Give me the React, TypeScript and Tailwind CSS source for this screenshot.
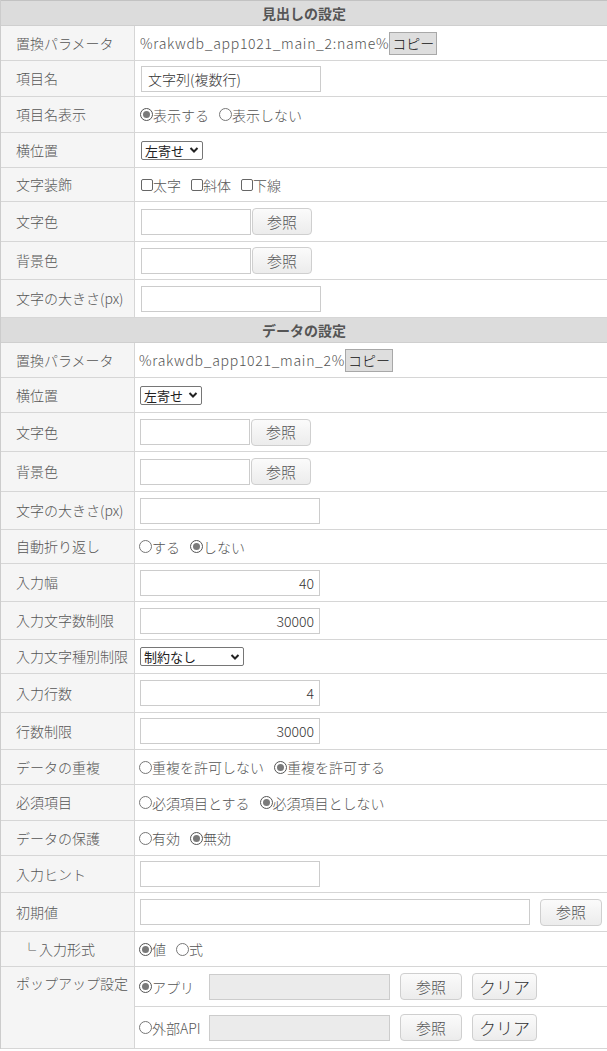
import React from "react";

const LBL = "bg-[#f5f5f5] border-r border-[#d6d6d6] pl-[15px] pb-[1px] flex items-center whitespace-nowrap";

function Radio({ checked }: { checked?: boolean }) {
  return (
    <span
      className={
        "inline-flex w-[13px] h-[13px] shrink-0 rounded-full items-center justify-center bg-white border " +
        (checked ? "border-[#555]" : "border-[#777]")
      }
    >
      {checked && <span className="w-[7px] h-[7px] rounded-full bg-[#7a7a7a]" />}
    </span>
  );
}

function RadioOpt({ checked, label }: { checked?: boolean; label: string }) {
  return (
    <span className="inline-flex items-center mr-[10px]">
      <Radio checked={checked} />
      <span>{label}</span>
    </span>
  );
}

function Check({ label }: { label: string }) {
  return (
    <span className="inline-flex items-center mr-[10px]">
      <span className="w-[12px] h-[12px] shrink-0 rounded-[2px] border border-[#666] bg-white" />
      <span>{label}</span>
    </span>
  );
}

function Select({ text, w }: { text: string; w: string }) {
  return (
    <span
      className={
        "inline-flex items-center justify-between h-[19px] border border-[#767676] rounded-[2px] bg-white pl-[3px] pr-[3px] text-[13px] text-[#222] leading-none font-normal " +
        w
      }
    >
      <span>{text}</span>
      <svg width="10" height="8" viewBox="0 0 10 8" className="ml-[4px]">
        <path d="M1.5 2 L5 5.5 L8.5 2" fill="none" stroke="#222" strokeWidth="2" />
      </svg>
    </span>
  );
}

function TextBox({ w, value, right, disabled }: { w: string; value?: string; right?: boolean; disabled?: boolean }) {
  return (
    <input
      readOnly
      value={value ?? ""}
      className={
        "h-[26px] border border-[#cccccc] px-[6px] text-[14px] text-[#333] outline-none " +
        (right ? "text-right pr-[5px] " : "") +
        (disabled ? "bg-[#ebebeb] " : "bg-white ") +
        w
      }
    />
  );
}

function RefBtn({ w = "w-[60px]", text = "参照", big }: { w?: string; text?: string; big?: boolean }) {
  return (
    <span
      className={
        "inline-flex items-center justify-center h-[27px] rounded-[4px] border border-[#cfcfcf] bg-gradient-to-b from-[#fbfbfb] to-[#ececec] " +
        (big ? "text-[17px] text-[#333] " : "text-[15px] text-[#555] ") +
        w
      }
    >
      {text}
    </span>
  );
}

function CopyBtn() {
  return (
    <span className="inline-flex items-center h-[23px] px-[2px] bg-[#dedede] border border-[#a8a8a8] text-[14px] text-[#111]">
      コピー
    </span>
  );
}

function Row({ label, h, children, pl = "pl-[6px]" }: { label: React.ReactNode; h: string; children?: React.ReactNode; pl?: string }) {
  return (
    <div className={"grid grid-cols-[134px_1fr] border-b border-[#d6d6d6] " + h}>
      <div className={LBL}>{label}</div>
      <div className={"flex items-center " + pl}>{children}</div>
    </div>
  );
}

function Header({ text, top, h }: { text: string; top?: boolean; h: string }) {
  return (
    <div
      className={
        "flex items-center justify-center bg-[#dcdcdc] border-b border-[#cfcfcf] font-bold text-[14px] text-[#555] " +
        (top ? "border-t border-t-[#c2c2c2] " : "") +
        h
      }
    >
      {text}
    </div>
  );
}

export default function App() {
  const p2 = "pl-[5px]";
  return (
    <div className="w-[607px] min-h-[1051px] bg-white font-['Noto_Sans_CJK_JP','Noto_Sans',sans-serif] font-light text-[14px] text-[#555] leading-[20px]">
      <div className="border-l border-[#cccccc]">
        <Header text="見出しの設定" top h="h-[26px]" />
        <Row label="置換パラメータ" h="h-[35px]" pl="pl-[5px]">
          <span className="tracking-[0.7px]">%rakwdb_app1021_main_2:name%</span>
          <CopyBtn />
        </Row>
        <Row label="項目名" h="h-[36px]">
          <TextBox w="w-[180px]" value="文字列(複数行)" />
        </Row>
        <Row label="項目名表示" h="h-[36px]" pl="pl-[5px]">
          <RadioOpt checked label="表示する" />
          <RadioOpt label="表示しない" />
        </Row>
        <Row label="横位置" h="h-[35px]">
          <Select text="左寄せ" w="w-[62px]" />
        </Row>
        <Row label="文字装飾" h="h-[34px]">
          <Check label="太字" />
          <Check label="斜体" />
          <Check label="下線" />
        </Row>
        <Row label="文字色" h="h-[40px]">
          <TextBox w="w-[110px]" />
          <span className="ml-[1px]"><RefBtn /></span>
        </Row>
        <Row label="背景色" h="h-[38px]">
          <TextBox w="w-[110px]" />
          <span className="ml-[1px]"><RefBtn /></span>
        </Row>
        <Row label="文字の大きさ(px)" h="h-[38px]">
          <TextBox w="w-[180px]" />
        </Row>

        <Header text="データの設定" h="h-[25px]" />
        <Row label="置換パラメータ" h="h-[35px]" pl="pl-[4px]">
          <span className="tracking-[0.7px]">%rakwdb_app1021_main_2%</span>
          <CopyBtn />
        </Row>
        <Row label="横位置" h="h-[35px]" pl={p2}>
          <Select text="左寄せ" w="w-[62px]" />
        </Row>
        <Row label="文字色" h="h-[39px]" pl={p2}>
          <TextBox w="w-[110px]" />
          <span className="ml-[1px]"><RefBtn /></span>
        </Row>
        <Row label="背景色" h="h-[40px]" pl={p2}>
          <TextBox w="w-[110px]" />
          <span className="ml-[1px]"><RefBtn /></span>
        </Row>
        <Row label="文字の大きさ(px)" h="h-[38px]" pl={p2}>
          <TextBox w="w-[180px]" />
        </Row>
        <Row label="自動折り返し" h="h-[34px]" pl="pl-[4px]">
          <RadioOpt label="する" />
          <RadioOpt checked label="しない" />
        </Row>
        <Row label="入力幅" h="h-[38px]" pl={p2}>
          <TextBox w="w-[180px]" value="40" right />
        </Row>
        <Row label="入力文字数制限" h="h-[38px]" pl={p2}>
          <TextBox w="w-[180px]" value="30000" right />
        </Row>
        <Row label="入力文字種別制限" h="h-[34px]" pl={p2}>
          <Select text="制約なし" w="w-[104px]" />
        </Row>
        <Row label="入力行数" h="h-[39px]" pl={p2}>
          <TextBox w="w-[180px]" value="4" right />
        </Row>
        <Row label="行数制限" h="h-[37px]" pl={p2}>
          <TextBox w="w-[180px]" value="30000" right />
        </Row>
        <Row label="データの重複" h="h-[35px]" pl="pl-[4px]">
          <RadioOpt label="重複を許可しない" />
          <RadioOpt checked label="重複を許可する" />
        </Row>
        <Row label="必須項目" h="h-[36px]" pl="pl-[4px]">
          <RadioOpt label="必須項目とする" />
          <RadioOpt checked label="必須項目としない" />
        </Row>
        <Row label="データの保護" h="h-[35px]" pl="pl-[4px]">
          <RadioOpt label="有効" />
          <RadioOpt checked label="無効" />
        </Row>
        <Row label="入力ヒント" h="h-[37px]" pl={p2}>
          <TextBox w="w-[180px]" />
        </Row>
        <Row label="初期値" h="h-[39px]" pl={p2}>
          <TextBox w="w-[390px]" />
          <span className="ml-[10px]"><RefBtn w="w-[62px]" /></span>
        </Row>
        <Row label={<span className="pl-[6px]">└ 入力形式</span>} h="h-[35px]" pl="pl-[4px]">
          <RadioOpt checked label="値" />
          <RadioOpt label="式" />
        </Row>
        <div className="grid grid-cols-[134px_1fr] border-b border-[#d6d6d6]">
          <div className="bg-[#f5f5f5] border-r border-[#d6d6d6] pl-[15px] pt-[6px] whitespace-nowrap">ポップアップ設定</div>
          <div className="flex flex-col">
            <div className="flex items-center h-[40px] border-b border-[#d6d6d6] pl-[4px]">
              <span className="inline-flex items-center w-[70px]">
                <Radio checked />
                <span>アプリ</span>
              </span>
              <TextBox w="w-[181px]" disabled />
              <span className="ml-[10px]"><RefBtn w="w-[62px]" /></span>
              <span className="ml-[10px]"><RefBtn w="w-[65px]" text="クリア" big /></span>
            </div>
            <div className="flex items-center h-[41px] pl-[4px]">
              <span className="inline-flex items-center w-[70px]">
                <Radio />
                <span>外部API</span>
              </span>
              <TextBox w="w-[181px]" disabled />
              <span className="ml-[10px]"><RefBtn w="w-[62px]" /></span>
              <span className="ml-[10px]"><RefBtn w="w-[65px]" text="クリア" big /></span>
            </div>
          </div>
        </div>
      </div>
    </div>
  );
}
